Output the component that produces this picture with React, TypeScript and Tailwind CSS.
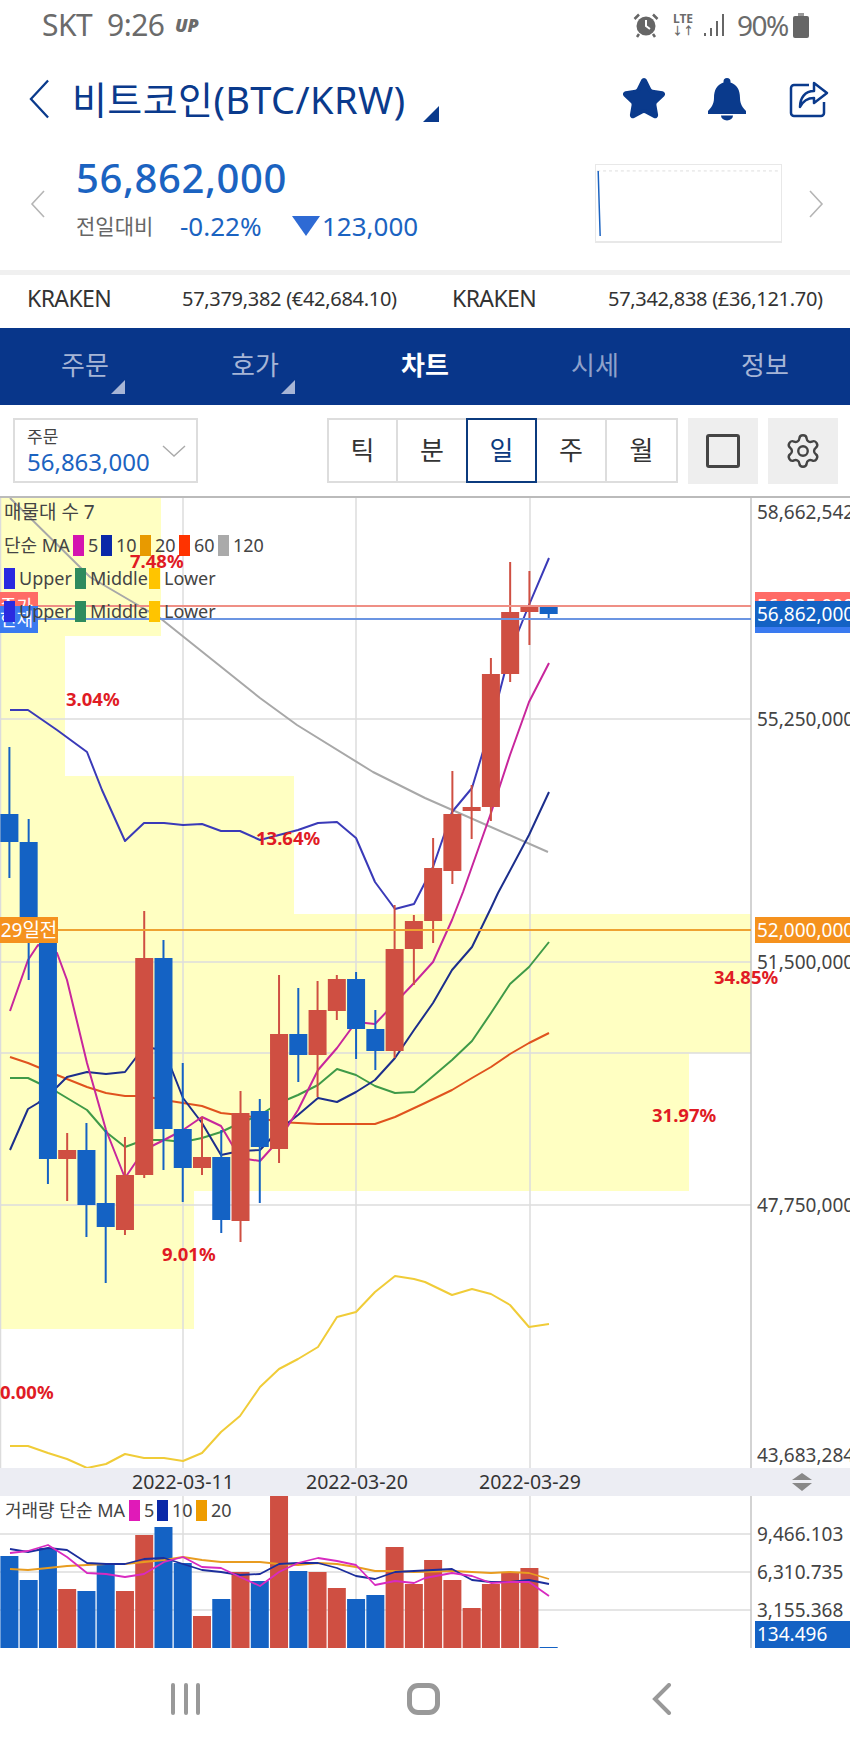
import React from 'react';
import { Settings, Star } from 'lucide-react';

const FONT = "font-['Noto_Sans','Noto_Sans_CJK_KR',sans-serif]";

type Candle = [number, number, number, number, 'r' | 'b'];

// wick top, body top, body bottom, wick bottom
const candles: Candle[] = [
  [747, 814, 842, 878, 'b'], [819, 842, 940, 980, 'b'], [925, 943, 1159, 1184, 'b'],
  [1133, 1150, 1159, 1201, 'r'], [1123, 1150, 1205, 1237, 'b'], [1130, 1203, 1227, 1283, 'b'],
  [1137, 1175, 1230, 1235, 'r'], [911, 958, 1175, 1178, 'r'], [940, 958, 1129, 1170, 'b'],
  [1063, 1129, 1168, 1202, 'b'], [1117, 1157, 1168, 1175, 'r'], [1130, 1157, 1220, 1233, 'b'],
  [1091, 1113, 1221, 1242, 'r'], [1099, 1111, 1147, 1203, 'b'], [975, 1034, 1149, 1163, 'r'],
  [988, 1034, 1055, 1082, 'b'], [981, 1010, 1055, 1097, 'r'], [975, 979, 1011, 1020, 'r'],
  [972, 979, 1029, 1059, 'b'], [1010, 1029, 1051, 1070, 'b'], [905, 949, 1051, 1058, 'r'],
  [915, 921, 949, 985, 'r'], [838, 868, 921, 943, 'r'], [771, 814, 871, 884, 'r'],
  [785, 807, 811, 839, 'r'], [658, 674, 807, 821, 'r'], [562, 612, 674, 682, 'r'],
  [571, 607, 612, 645, 'r'], [607, 607, 614, 619, 'b'],
];

const volumes: [number, 'r' | 'b'][] = [
  [1556, 'b'], [1580, 'b'], [1548, 'b'], [1589, 'r'], [1591, 'b'], [1565, 'b'], [1591, 'r'], [1535, 'r'],
  [1527, 'b'], [1563, 'b'], [1616, 'r'], [1599, 'b'], [1572, 'r'], [1581, 'b'], [1496, 'r'], [1571, 'b'],
  [1572, 'r'], [1588, 'r'], [1599, 'b'], [1595, 'b'], [1547, 'r'], [1584, 'r'], [1560, 'r'], [1580, 'r'],
  [1608, 'r'], [1584, 'r'], [1572, 'r'], [1568, 'r'], [1647, 'b'],
];

const cx = (i: number) => 9.4 + 19.26 * i;

const maPink = '10,1011 28,960 38,945 57,953 67,980 87,1063 106,1130 125,1178 144,1150 164,1140 183,1130 202,1117 221,1126 240,1158 260,1161 279,1140 298,1110 318,1070 337,1048 356,1022 375,1024 395,1003 414,983 433,962 452,920 463,892 491,813 510,755 529,702 549,663';
const maNavy = '10,1150 28,1109 38,1103 57,1087 67,1077 87,1072 106,1074 125,1072 144,1047 164,1050 183,1098 202,1123 221,1155 240,1151 260,1150 279,1130 298,1115 318,1098 337,1102 356,1092 375,1080 395,1058 414,1030 433,1003 452,970 472,947 491,908 498,893 529,835 549,792';
const maGreen = '10,1078 28,1078 57,1092 87,1110 106,1132 125,1147 144,1140 164,1140 183,1142 202,1138 221,1132 240,1123 260,1115 279,1103 298,1095 318,1085 337,1069 356,1075 375,1086 395,1093 414,1092 425,1083 452,1060 472,1041 491,1013 510,984 529,967 549,942';
const maOrange = '10,1057 28,1063 57,1075 87,1087 106,1093 125,1096 144,1096 164,1100 183,1103 202,1106 221,1113 240,1115 260,1118 279,1122 298,1123 318,1124 337,1124 375,1124 395,1117 425,1103 452,1090 472,1078 491,1067 510,1054 529,1043 549,1033';
const maUpper = '10,710 28,710 57,730 87,752 102,790 125,841 144,823 164,823 183,825 202,824 221,831 240,831 260,840 279,835 298,830 318,823 337,822 356,838 375,882 395,909 414,904 433,867 452,812 472,788 491,725 510,652 529,605 549,558';
const maGray = '10,498 90,577 160,618 260,698 297,725 373,772 425,798 548,852';
const maYellow = '10,1446 28,1446 48,1453 67,1459 87,1468 106,1464 125,1454 144,1458 164,1458 183,1461 202,1453 221,1432 240,1416 260,1387 279,1369 298,1359 318,1347 337,1317 356,1312 375,1292 395,1276 414,1279 425,1282 452,1295 472,1289 491,1294 510,1305 529,1327 549,1324';

const volNavy = '10,1549 28,1552 48,1548 67,1550 87,1563 106,1564 125,1564 144,1559 164,1558 183,1564 202,1570 221,1572 240,1575 260,1574 279,1564 298,1563 318,1563 337,1568 356,1576 375,1579 395,1572 414,1571 452,1569 472,1580 491,1582 510,1582 529,1580 549,1584';
const volPink = '10,1553 28,1551 48,1545 67,1557 87,1573 106,1574 125,1577 144,1574 164,1562 183,1557 202,1567 221,1568 240,1577 260,1586 279,1572 298,1563 318,1558 337,1561 356,1565 375,1585 395,1581 414,1583 425,1578 452,1573 472,1576 491,1583 510,1582 529,1582 549,1596';
const volOrange = '10,1569 28,1570 48,1568 67,1566 87,1565 106,1564 125,1564 144,1562 164,1560 183,1557 202,1560 221,1562 240,1562 260,1562 279,1564 298,1565 318,1563 337,1564 356,1567 375,1571 395,1571 414,1572 452,1571 472,1572 491,1573 510,1572 529,1573 549,1579';

const Chevron = ({ dir, className }: { dir: 'l' | 'r'; className: string }) => (
  <svg viewBox="0 0 16 28" className={className} fill="none" stroke="currentColor" strokeWidth="1.6">
    <polyline points={dir === 'l' ? '14,1 2,14 14,27' : '2,1 14,14 2,27'} />
  </svg>
);

const Swatch = ({ className }: { className: string }) => <span className={`w-[11px] h-[21px] shrink-0 ${className}`} />;

const Pct = ({ className, children }: { className: string; children: React.ReactNode }) => (
  <span className={`absolute text-[18.5px] leading-[20px] font-bold text-[#e01b24] whitespace-nowrap ${className}`}>{children}</span>
);

const Axis = ({ className, children }: { className: string; children: React.ReactNode }) => (
  <span className={`absolute left-[757px] text-[19px] leading-[22px] text-[#444] whitespace-nowrap ${className}`}>{children}</span>
);

const BandRow = () => (
  <div className="flex h-[21px] items-center gap-[4px]">
    <Swatch className="bg-[#2a2ae0]" />
    <span className="w-[52px]">Upper</span>
    <Swatch className="bg-[#2e8b5e]" />
    <span className="w-[55px]">Middle</span>
    <Swatch className="bg-[#ffc400]" />
    <span>Lower</span>
  </div>
);

const App: React.FC = () => {
  return (
    <div className={`w-[850px] h-[1748px] overflow-hidden bg-white ${FONT}`}>
      {/* status bar */}
      <div className="h-[50px] flex items-center pl-[42px] pr-[41px] text-[#6b6b6b]">
        <span className="text-[30px] leading-none w-[65px] tracking-[-0.5px]">SKT</span>
        <span className="text-[30px] leading-none w-[68px] tracking-[-0.5px]">9:26</span>
        <span className="text-[18px] leading-none font-black italic">UP</span>
        <div className="ml-auto flex items-center">
          <svg viewBox="0 0 26 26" className="w-[26px] h-[26px]">
            <circle cx="13" cy="14" r="9.5" fill="#666" />
            <path d="M13 8v6l4 3" stroke="#fff" strokeWidth="2" fill="none" />
            <path d="M1.5 7 6 2.5M24.5 7 20 2.5M6 22l-2 3M20 22l2 3" stroke="#666" strokeWidth="2.5" fill="none" />
          </svg>
          <div className="ml-[12px] w-[24px] flex flex-col items-center text-[12px] leading-[12px] font-bold">
            <span>LTE</span>
            <span className="text-[11px]">↓↑</span>
          </div>
          <svg viewBox="0 0 22 22" className="ml-[9px] w-[22px] h-[22px]" fill="#666">
            <rect x="0" y="19" width="2" height="3" />
            <rect x="6" y="14" width="2" height="8" />
            <rect x="12" y="7" width="2" height="15" />
            <rect x="18" y="0" width="2" height="22" />
          </svg>
          <span className="ml-[11px] text-[28px] leading-none w-[56px] tracking-[-1.5px]">90%</span>
          <div className="relative w-[16px] h-[22px] mt-[3px] bg-[#666] rounded-[2px]">
            <div className="absolute -top-[3px] left-[5px] w-[6px] h-[3px] bg-[#999]" />
          </div>
        </div>
      </div>

      {/* title row */}
      <div className="h-[98px] flex items-center text-[#0a3a8c]">
        <Chevron dir="l" className="ml-[27px] w-[25px] h-[40px]" />
        <span className="ml-[20px] text-[38px] leading-none tracking-[0.4px] whitespace-nowrap w-[351px]">비트코인(BTC/KRW)</span>
        <div className="w-[16px] h-[16px] mt-[30px] bg-[#0a3a8c] [clip-path:polygon(100%_0,100%_100%,0_100%)]" />
        <Star className="ml-[182px] w-[46px] h-[46px] fill-[#0a3a8c]" strokeWidth={2} />
        <svg viewBox="0 0 40 44" className="ml-[40px] w-[40px] h-[44px]" fill="#0a3a8c">
          <path d="M20 1a3.5 3.5 0 0 1 3.5 3.5v1C30 7.500 33 13 33 21c0 6 3 10 6 13v3H1v-3c3-3 6-7 6-13C7 13 10 7.500 16.500 5.500v-1A3.500 3.500 0 0 1 20 1z" />
          <path d="M14 38.500h12a6 5 0 0 1-12 0z" />
        </svg>
        <svg viewBox="0 0 40 38" className="ml-[42px] w-[40px] h-[38px]" fill="none" stroke="#0a3a8c" strokeWidth="2.5">
          <path d="M20 5H5a3 3 0 0 0-3 3v25a3 3 0 0 0 3 3h27a3 3 0 0 0 3-3V22" />
          <path d="M25 3 38 13 25 23v-5c-7 0-11 3-14 9 0-9 5-16 14-16z" strokeLinejoin="round" />
        </svg>
      </div>

      {/* price section */}
      <div className="h-[122px] flex items-start">
        <Chevron dir="l" className="ml-[30px] mt-[42px] w-[16px] h-[28px] text-[#b5b5b5]" />
        <div className="ml-[30px] mt-[8px] w-[519px]">
          <div className="text-[40px] leading-[44px] font-medium text-[#1b63c1] tracking-[0.6px]">56,862,000</div>
          <div className="mt-[14px] flex items-center">
            <span className="text-[21px] leading-[24px] text-[#666] w-[104px]">전일대비</span>
            <span className="text-[26px] leading-[24px] text-[#1b63c1] w-[112px]">-0.22%</span>
            <span className="w-[28px] h-[20px] bg-[#2e6ad4] [clip-path:polygon(0_0,100%_0,50%_100%)]" />
            <span className="ml-[2px] text-[26px] leading-[24px] text-[#1b63c1]">123,000</span>
          </div>
        </div>
        <div className="mt-[16px] w-[187px] h-[79px] border border-[#e8e8e8] border-b-2">
          <svg viewBox="0 0 185 77" className="w-full h-full block">
            <line x1="0" y1="6" x2="185" y2="6" stroke="#ddd" strokeDasharray="3 3" />
            <path d="M1 6 L2 40 L3 72" stroke="#1b63c1" strokeWidth="1.5" fill="none" />
          </svg>
        </div>
        <Chevron dir="r" className="ml-[26px] mt-[42px] w-[16px] h-[28px] text-[#b5b5b5]" />
      </div>

      <div className="h-[5px] bg-[#f0f0f0]" />

      {/* exchange row */}
      <div className="h-[53px] flex items-center pb-[6px] text-[#333] whitespace-nowrap">
        <span className="ml-[27px] w-[155px] text-[23px] leading-none tracking-[-0.6px]">KRAKEN</span>
        <span className="w-[270px] text-[20px] leading-none tracking-[-0.3px]">57,379,382 (€42,684.10)</span>
        <span className="w-[156px] text-[23px] leading-none tracking-[-0.6px]">KRAKEN</span>
        <span className="text-[20px] leading-none tracking-[-0.3px]">57,342,838 (£36,121.70)</span>
      </div>

      {/* tabs */}
      <div className="h-[77px] grid grid-cols-5 bg-[#08368a] text-[26px] leading-none">
        <div className="relative flex items-center justify-center text-[#a6b5d6] pb-[4px]">
          주문
          <div className="absolute left-[111px] top-[52px] w-[14px] h-[14px] bg-[#a6b5d6] [clip-path:polygon(100%_0,100%_100%,0_100%)]" />
        </div>
        <div className="relative flex items-center justify-center text-[#a6b5d6] pb-[4px]">
          호가
          <div className="absolute left-[111px] top-[52px] w-[14px] h-[14px] bg-[#a6b5d6] [clip-path:polygon(100%_0,100%_100%,0_100%)]" />
        </div>
        <div className="flex items-center justify-center text-white font-bold pb-[4px]">차트</div>
        <div className="flex items-center justify-center text-[#8fa1ca] pb-[4px]">시세</div>
        <div className="flex items-center justify-center text-[#a6b5d6] pb-[4px]">정보</div>
      </div>

      {/* toolbar */}
      <div className="h-[93px] flex items-start pt-[13px] border-b-2 border-[#bbb]">
        <div className="ml-[13px] w-[185px] h-[65px] border-2 border-[#ddd] relative pl-[12px] pt-[7px]">
          <div className="text-[17px] leading-[20px] text-[#444]">주문</div>
          <div className="mt-[2px] text-[24px] leading-[26px] text-[#1b63c1] whitespace-nowrap">56,863,000</div>
          <svg viewBox="0 0 24 12" className="absolute left-[147px] top-[25px] w-[24px] h-[12px]" fill="none" stroke="#aaa" strokeWidth="1.4">
            <polyline points="1,1 12,11 23,1" />
          </svg>
        </div>
        <div className="ml-[129px] w-[351px] h-[65px] flex border-2 border-[#ddd] text-[26px] text-[#333]">
          <div className="w-[69px] flex items-center justify-center border-r-2 border-[#ddd]">틱</div>
          <div className="w-[68px] flex items-center justify-center">분</div>
          <div className="w-[71px] -my-[2px] flex items-center justify-center border-2 border-[#0b3a7e] text-[#0b3a7e]">일</div>
          <div className="w-[70px] flex items-center justify-center border-r-2 border-[#ddd]">주</div>
          <div className="flex-1 flex items-center justify-center">월</div>
        </div>
        <div className="ml-[10px] w-[70px] h-[66px] bg-[#eeeeee] flex items-center justify-center">
          <div className="w-[34px] h-[34px] rounded-[3px] border-[3px] border-[#444]" />
        </div>
        <div className="ml-[10px] w-[70px] h-[66px] bg-[#eeeeee] flex items-center justify-center">
          <Settings className="w-[38px] h-[38px] text-[#444]" strokeWidth={1.5} />
        </div>
      </div>

      {/* price chart */}
      <div className="relative h-[970px]">
        <svg viewBox="0 498 850 970" className="block w-[850px] h-[970px]" fill="none">
          <g fill="#ffffc2">
            <rect x="0" y="498" width="161" height="138" />
            <rect x="0" y="636" width="65" height="140" />
            <rect x="0" y="776" width="294" height="138" />
            <rect x="0" y="914" width="751" height="139" />
            <rect x="0" y="1053" width="689" height="138" />
            <rect x="0" y="1191" width="194" height="138" />
          </g>
          <g stroke="#dcdcdc" strokeWidth="1.5">
            <line x1="183" y1="498" x2="183" y2="1468" />
            <line x1="356" y1="498" x2="356" y2="1468" />
            <line x1="530" y1="498" x2="530" y2="1468" />
            <line x1="0" y1="719" x2="751" y2="719" />
            <line x1="0" y1="962" x2="751" y2="962" />
            <line x1="0" y1="1053" x2="751" y2="1053" />
            <line x1="0" y1="1205" x2="751" y2="1205" />
            <line x1="0.5" y1="498" x2="0.5" y2="1468" />
          </g>
          <line x1="751" y1="498" x2="751" y2="1468" stroke="#c4c4c4" strokeWidth="1.5" />
          <g strokeWidth="2" strokeLinejoin="round">
            <polyline points={maGray} stroke="#a8a8a8" />
            <polyline points={maYellow} stroke="#f0cc38" />
            <polyline points={maOrange} stroke="#e0531e" />
            <polyline points={maGreen} stroke="#3f9a48" />
            <polyline points={maNavy} stroke="#1c2e8c" />
            <polyline points={maPink} stroke="#c8269c" />
            <polyline points={maUpper} stroke="#3a3ab8" />
          </g>
          {candles.map(([wt, bt, bb, wb, c], i) => {
            const color = c === 'r' ? '#cf4f42' : '#1462c4';
            return (
              <g key={i}>
                <line x1={cx(i)} y1={wt} x2={cx(i)} y2={wb} stroke={color} strokeWidth="2" />
                <rect x={cx(i) - 9} y={bt} width="18" height={bb - bt} fill={color} />
              </g>
            );
          })}
          <line x1="0" y1="606" x2="751" y2="606" stroke="#ef8f85" strokeWidth="2" />
          <line x1="0" y1="619" x2="751" y2="619" stroke="#6b95e2" strokeWidth="2" />
          <line x1="0" y1="930" x2="751" y2="930" stroke="#eea232" strokeWidth="2" />
        </svg>

        {/* left price tags */}
        <div className="absolute left-0 top-[94px] w-[38px] h-[28px] overflow-hidden bg-[#ff6b66] text-[18px] leading-[28px] text-white">종가</div>
        <div className="absolute left-0 top-[108px] w-[38px] h-[27px] overflow-hidden bg-[#3a7af0] text-[18px] leading-[27px] text-white">현재</div>
        <div className="absolute left-0 top-[419px] w-[58px] h-[26px] bg-[#f5921e] text-[19px] leading-[26px] text-white whitespace-nowrap text-center">29일전</div>

        {/* legend */}
        <div className="absolute left-[4px] top-[4px] flex flex-col gap-[12px] text-[18px] leading-[21px] text-[#444] whitespace-nowrap">
          <div className="h-[21px] text-[19px]">매물대 수 7</div>
          <div className="flex h-[21px] items-center gap-[4px]">
            <span className="w-[65px]">단순 MA</span>
            <Swatch className="bg-[#d414b0]" />
            <span className="w-[9px]">5</span>
            <Swatch className="bg-[#0a28a8]" />
            <span className="w-[20px]">10</span>
            <Swatch className="bg-[#e89a00]" />
            <span className="w-[20px]">20</span>
            <Swatch className="bg-[#ff3300]" />
            <span className="w-[20px]">60</span>
            <Swatch className="bg-[#aaaaaa]" />
            <span>120</span>
          </div>
          <BandRow />
          <BandRow />
        </div>

        <Pct className="left-[130px] top-[53px]">7.48%</Pct>
        <Pct className="left-[66px] top-[191px]">3.04%</Pct>
        <Pct className="left-[256px] top-[330px]">13.64%</Pct>
        <Pct className="left-[162px] top-[746px]">9.01%</Pct>
        <Pct className="left-[0px] top-[884px]">0.00%</Pct>

        {/* axis */}
        <Axis className="top-[3px]">58,662,542</Axis>
        <div className="absolute left-[755px] top-[94px] w-[95px] h-[28px] overflow-hidden bg-[#ff6b66] pl-[2px] text-[19px] leading-[28px] text-white whitespace-nowrap">56,985,000</div>
        <div className="absolute left-[755px] top-[103px] w-[95px] h-[32px] overflow-hidden bg-[#1462c4] border-b-[6px] border-[#3a7af0] pl-[2px] text-[19px] leading-[26px] text-white whitespace-nowrap">56,862,000</div>
        <Axis className="top-[210px]">55,250,000</Axis>
        <div className="absolute left-[755px] top-[419px] w-[95px] h-[26px] overflow-hidden bg-[#f5921e] pl-[2px] text-[19px] leading-[26px] text-white whitespace-nowrap">52,000,000</div>
        <Axis className="top-[453px]">51,500,000</Axis>
        <Axis className="top-[696px]">47,750,000</Axis>
        <Axis className="top-[946px]">43,683,284</Axis>

        <Pct className="left-[714px] top-[469px]">34.85%</Pct>
        <Pct className="left-[652px] top-[607px]">31.97%</Pct>
      </div>

      {/* date bar */}
      <div className="relative h-[28px] bg-[#ecedf3] text-[19.5px] leading-[28px] text-[#333] whitespace-nowrap">
        <span className="absolute left-[132px]">2022-03-11</span>
        <span className="absolute left-[306px]">2022-03-20</span>
        <span className="absolute left-[479px]">2022-03-29</span>
        <div className="absolute left-[792px] top-[5px] w-[20px] h-[7px] bg-[#888] [clip-path:polygon(50%_0,100%_100%,0_100%)]" />
        <div className="absolute left-[792px] top-[15px] w-[20px] h-[8px] bg-[#888] [clip-path:polygon(0_0,100%_0,50%_100%)]" />
      </div>

      {/* volume chart */}
      <div className="relative h-[152px]">
        <svg viewBox="0 1496 850 152" className="block w-[850px] h-[152px]" fill="none">
          <g stroke="#dcdcdc" strokeWidth="1.5">
            <line x1="183" y1="1496" x2="183" y2="1648" />
            <line x1="356" y1="1496" x2="356" y2="1648" />
            <line x1="530" y1="1496" x2="530" y2="1648" />
            <line x1="0" y1="1534" x2="751" y2="1534" />
            <line x1="0" y1="1572" x2="751" y2="1572" />
            <line x1="0" y1="1610" x2="751" y2="1610" />
          </g>
          <line x1="751" y1="1496" x2="751" y2="1648" stroke="#c4c4c4" strokeWidth="1.5" />
          {volumes.map(([top, c], i) => (
            <rect key={i} x={cx(i) - 9} y={top} width="18" height={1648 - top} fill={c === 'r' ? '#cf4f42' : '#1462c4'} />
          ))}
          <g strokeWidth="1.8" strokeLinejoin="round">
            <polyline points={volOrange} stroke="#e89c20" />
            <polyline points={volNavy} stroke="#1c2e9c" />
            <polyline points={volPink} stroke="#d82ac0" />
          </g>
        </svg>
        <div className="absolute left-[5px] top-[4px] flex h-[21px] items-center gap-[4px] text-[18px] leading-[21px] text-[#444] whitespace-nowrap">
          <span className="w-[120px]">거래량 단순 MA</span>
          <Swatch className="bg-[#e01ab8]" />
          <span className="w-[9px]">5</span>
          <Swatch className="bg-[#0a28a8]" />
          <span className="w-[20px]">10</span>
          <Swatch className="bg-[#ee9c00]" />
          <span>20</span>
        </div>
        <Axis className="top-[27px]">9,466.103</Axis>
        <Axis className="top-[65px]">6,310.735</Axis>
        <Axis className="top-[103px]">3,155.368</Axis>
        <div className="absolute left-[755px] top-[125px] w-[95px] h-[27px] bg-[#1462c4] pl-[2px] text-[19px] leading-[27px] text-white">134.496</div>
      </div>

      {/* android nav */}
      <div className="h-[100px] flex items-start pt-[35px] pl-[171px]">
        <div className="w-[29px] h-[32px] flex justify-between">
          <span className="w-[4px] h-[32px] rounded-full bg-[#999]" />
          <span className="w-[4px] h-[32px] rounded-full bg-[#999]" />
          <span className="w-[4px] h-[32px] rounded-full bg-[#999]" />
        </div>
        <div className="ml-[207px] w-[33px] h-[32px] rounded-[11px] border-[5px] border-[#999]" />
        <svg viewBox="0 0 20 32" className="ml-[212px] w-[20px] h-[32px]" fill="none" stroke="#999" strokeWidth="4" strokeLinecap="round">
          <polyline points="17,2 3,16 17,30" />
        </svg>
      </div>
    </div>
  );
};

export default App;
